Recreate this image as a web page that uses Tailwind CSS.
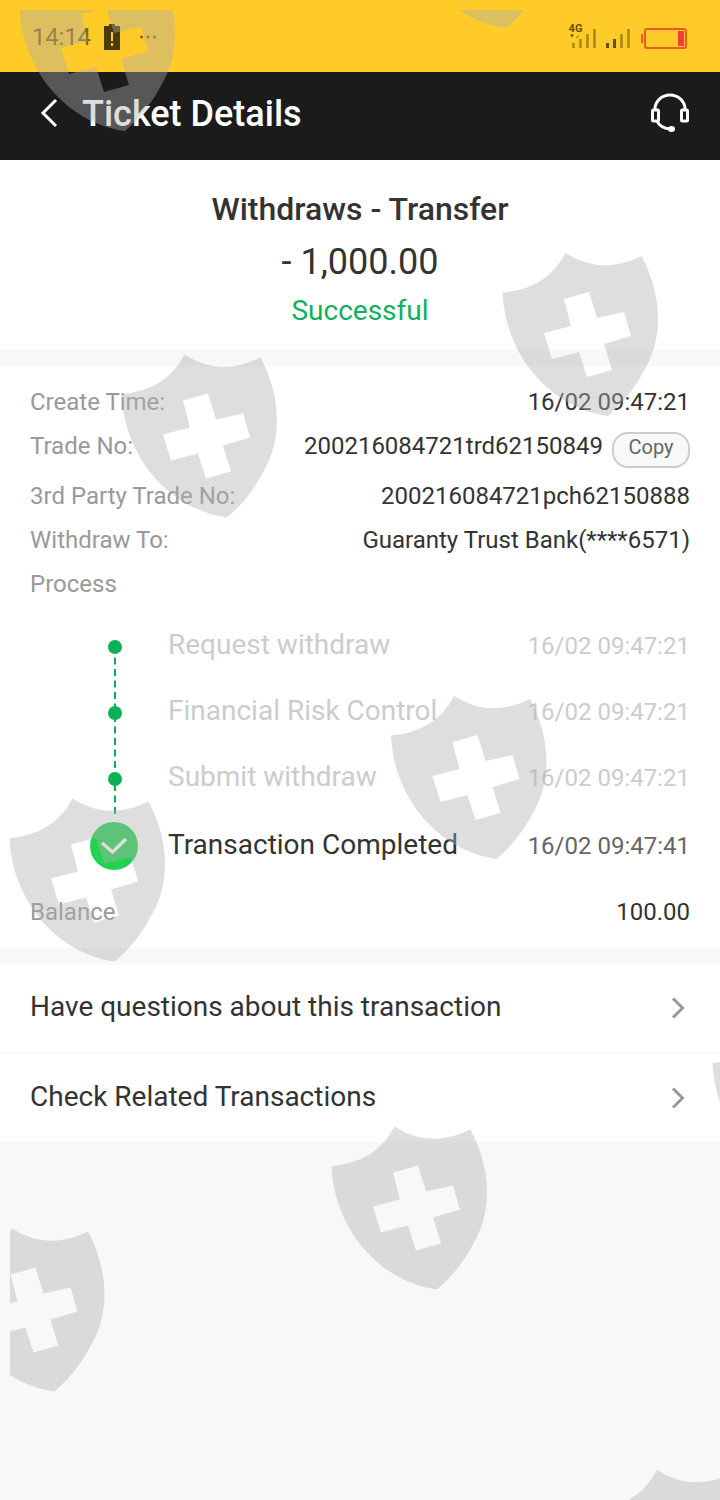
<!DOCTYPE html>
<html lang="en">
<head>
<meta charset="utf-8">
<title>Ticket Details</title>
<script src="https://cdn.jsdelivr.net/npm/@tailwindcss/browser@4"></script>
</head>
<body class="bg-[#f8f8f8]">
<div class="relative w-[720px] h-[1500px] overflow-hidden font-['Roboto',sans-serif] text-[#333] text-2xl leading-[44px] whitespace-nowrap">
  <div class="h-[72px] bg-[#ffcb29] flex items-center justify-between pl-8 pr-8 pt-[2px]">
    <div class="flex items-center text-[#806514]">
      <span class="w-[71px] tracking-[-0.2px]">14:14</span>
      <svg class="w-[18px] h-[26px]" viewBox="0 0 18 26"><path d="M6 0h6v2h5v24H1V2h5z" fill="#4a3b08"/><path d="M9 8v9m0 2v3" stroke="#ffcb29" stroke-width="2"/></svg>
      <svg class="ml-[18px] w-5 h-4" viewBox="0 0 20 16" fill="#806514"><circle cx="2.500" cy="8" r="1.500"/><circle cx="9" cy="8" r="1.500"/><circle cx="15.500" cy="8" r="1.500"/></svg>
    </div>
    <svg class="w-[120px] h-[30px]" viewBox="568 22 120 30">
      <text x="568.500" y="32" font-size="11" font-weight="700" fill="#66510c" textLength="14" lengthAdjust="spacingAndGlyphs">4G</text>
      <path d="M570 34.500h4l-2 3z" fill="#66510c"/><path d="M576 37.500l1.500-2 1.500 2z" fill="#a07c13"/>
      <path d="M573.500 48v-5M580.500 48v-9M587.500 48v-14M594.500 48v-19M621.500 48v-14M628.500 48v-19" stroke="#ad8718" stroke-width="2.600"/>
      <path d="M607.500 48v-5M614.500 48v-9" stroke="#66510c" stroke-width="3"/>
      <rect x="645" y="29" width="41" height="19" rx="2" fill="none" stroke="#ea5a22" stroke-width="2"/>
      <path d="M642 34v9" stroke="#ea5a22" stroke-width="2"/><rect x="678" y="31" width="6" height="15" fill="#f43d3d"/>
    </svg>
  </div>
  <div class="h-[88px] bg-[#1b1b1b] flex items-center pl-10 pr-[29px] text-white">
    <svg class="w-[19px] h-8 mt-[-6px]" viewBox="0 0 19 32" fill="none" stroke="#fff" stroke-width="3"><path d="M16 3L3 16l13 13"/></svg>
    <h1 class="ml-[23px] mt-[-4px] text-4xl font-medium">Ticket Details</h1>
    <svg class="ml-auto mt-[-6px] w-[41px] h-[42px]" viewBox="650 92 41 42" fill="none" stroke="#fff" stroke-width="3"><path d="M655 110v-1a15 14 0 0 1 30 0v1"/><rect x="652.500" y="110" width="6" height="11" rx="1"/><rect x="681.500" y="110" width="6" height="11" rx="1"/><path d="M657 121q3 7 13 8"/><ellipse cx="671.500" cy="129" rx="3.500" ry="3" fill="#fff" stroke="none"/></svg>
  </div>
  <section class="h-[190px] bg-white text-center pt-[27px]">
    <h2 class="text-[32px] font-medium leading-[44px]">Withdraws - Transfer</h2>
    <div class="text-4xl leading-[62px]">- 1,000.00</div>
    <div class="text-[28px] leading-[36px] text-[#10b060]">Successful</div>
  </section>
  <section class="mt-4 h-[582px] bg-white px-[30px] pt-[14px]">
    <div class="flex justify-between"><span class="text-[#999]">Create Time:</span><span>16/02 09:47:21</span></div>
    <div class="flex justify-between h-[50px]"><span class="text-[#999]">Trade No:</span><span class="flex gap-[9px]"><span>200216084721trd62150849</span><button class="mt-2 h-9 w-[78px] rounded-2xl border-2 border-[#ccc] bg-[#f8f8f8] pb-[5px] text-xl leading-[27px] text-[#666]">Copy</button></span></div>
    <div class="flex justify-between"><span class="text-[#999]">3rd Party Trade No:</span><span>200216084721pch62150888</span></div>
    <div class="flex justify-between"><span class="text-[#999]">Withdraw To:</span><span>Guaranty Trust Bank(****6571)</span></div>
    <div class="text-[#999]">Process</div>
    <div class="flex pt-[6px]">
      <svg class="w-[138px] h-[272px] shrink-0" viewBox="30 612 138 272"><path d="M115 647V816" stroke="#12ab58" stroke-width="2" stroke-dasharray="7 4.500" stroke-dashoffset="1"/><g fill="#0cb056"><circle cx="115" cy="647" r="7"/><circle cx="115" cy="713" r="7"/><circle cx="115" cy="779" r="7"/></g><circle cx="114" cy="846" r="24" fill="#23d253"/><path d="M102 843l10.500 9L126 839" fill="none" stroke="#fff" stroke-width="3.500"/></svg>
      <div class="flex-1 text-[#ccc] leading-[66px]">
        <div class="flex justify-between h-[66px]"><span class="text-[28px]">Request withdraw</span><span class="pt-px">16/02 09:47:21</span></div>
        <div class="flex justify-between h-[66px]"><span class="text-[28px]">Financial Risk Control</span><span class="pt-px">16/02 09:47:21</span></div>
        <div class="flex justify-between h-[66px]"><span class="text-[28px]">Submit withdraw</span><span class="pt-px">16/02 09:47:21</span></div>
        <div class="flex justify-between text-[#333] pt-[2px]"><span class="text-[28px]">Transaction Completed</span><span class="pt-px text-[#666]">16/02 09:47:41</span></div>
      </div>
    </div>
    <div class="flex justify-between mt-[6px]"><span class="text-[#999]">Balance</span><span>100.00</span></div>
  </section>
  <div class="mt-4 flex flex-col gap-[2px] text-[28px]">
    <div class="h-[88px] bg-white px-[30px] pb-[2px] flex items-center justify-between">Have questions about this transaction<svg class="w-5 h-6 mt-[2px] mr-px" viewBox="0 0 20 24"><path d="M4 2.500L13.500 12 4 21.500" fill="none" stroke="#999" stroke-width="3"/></svg></div>
    <div class="h-[88px] bg-white px-[30px] pb-[2px] flex items-center justify-between">Check Related Transactions<svg class="w-5 h-6 mt-[2px] mr-px" viewBox="0 0 20 24"><path d="M4 2.500L13.500 12 4 21.500" fill="none" stroke="#999" stroke-width="3"/></svg></div>
  </div>
  <svg class="absolute inset-0 w-[720px] h-[1500px] pointer-events-none" viewBox="0 0 720 1500">
    <defs>
      <path id="shield" fill-rule="evenodd" d="M12.500 52.500Q57 49 75.500 13Q111 36 151.500 16C171 52 174 95 156 127Q141 157 118 176C60 168 15 115 12.500 52.500ZM74 59L99 52L107 78L134 72L141 96L114 104L122 130L97 137L89 112L62 119L54 93L81 86Z"/>
      <clipPath id="frame"><rect x="10" y="10" width="710" height="1490"/></clipPath>
    </defs>
    <g fill="#afafaf" fill-opacity=".41" clip-path="url(#frame)">
      <use href="#shield" x="7" y="-45"/><use href="#shield" x="388" y="-148"/>
      <use href="#shield" x="490" y="240"/><use href="#shield" x="109" y="341.500"/>
      <use href="#shield" x="378.500" y="683"/><use href="#shield" x="-3" y="785.500"/>
      <use href="#shield" x="700" y="1010.500"/><use href="#shield" x="319" y="1113.500"/>
      <use href="#shield" x="-63.500" y="1215.500"/><use href="#shield" x="581.500" y="1457"/>
    </g>
  </svg>
</div>
</body>
</html>
